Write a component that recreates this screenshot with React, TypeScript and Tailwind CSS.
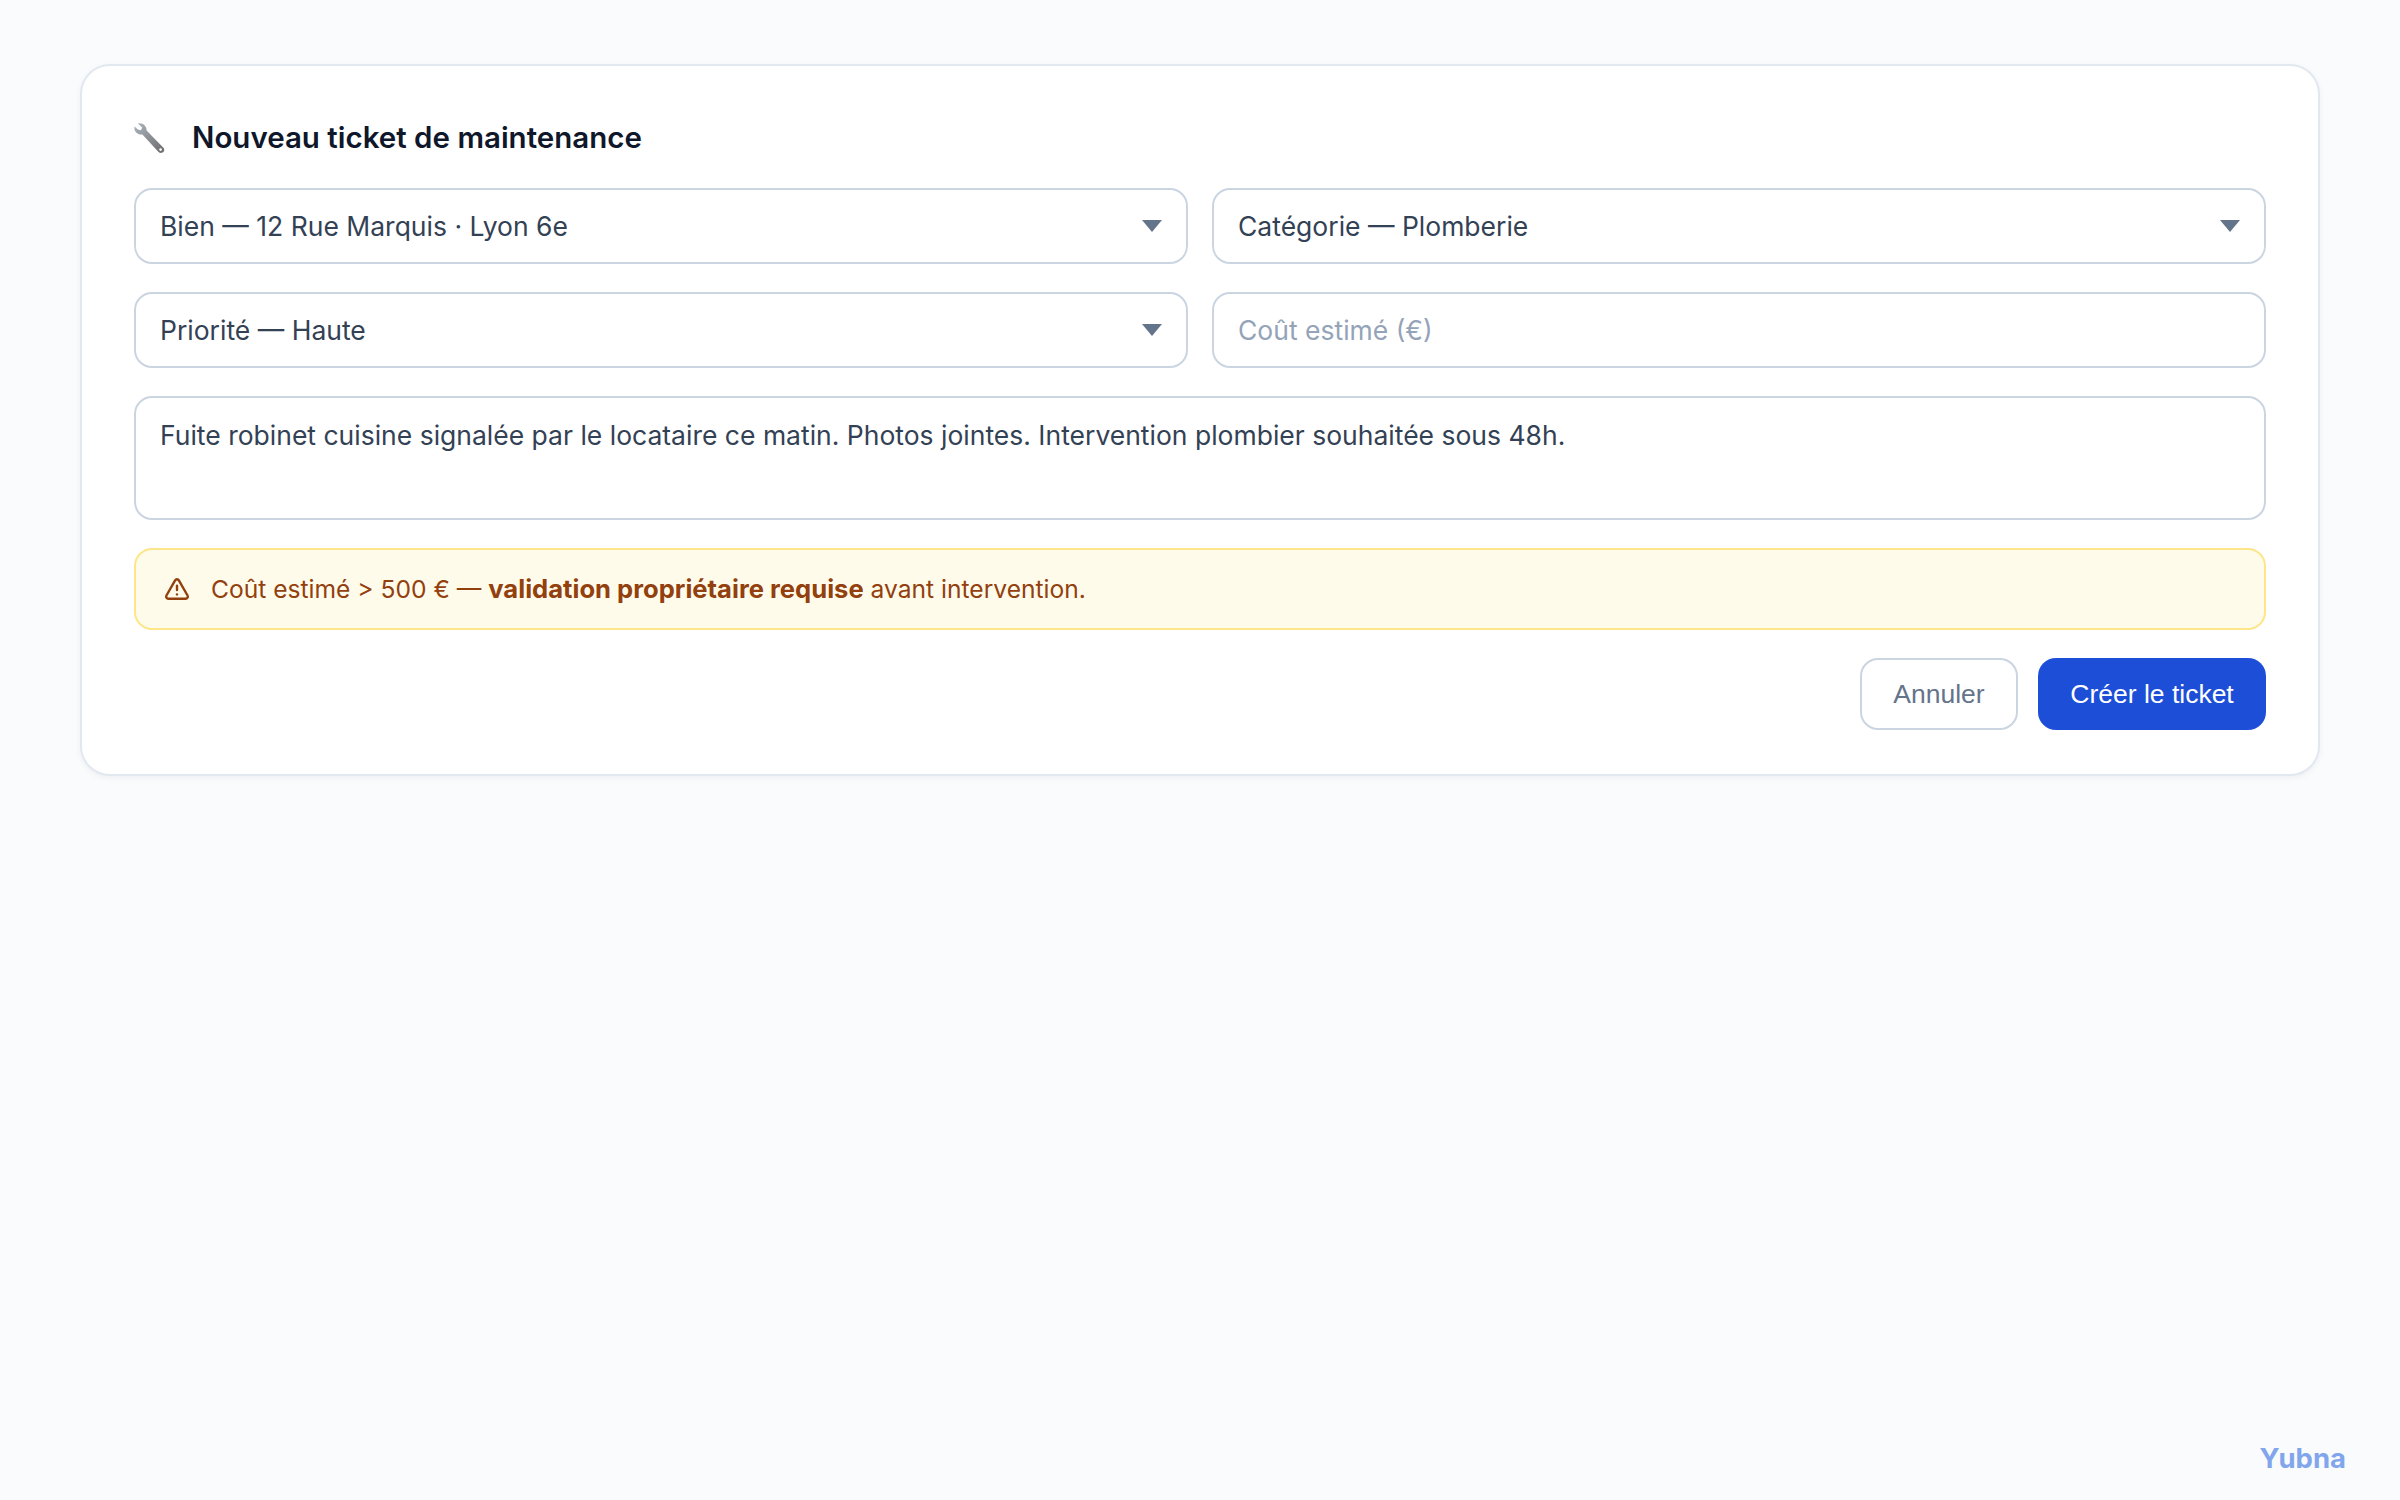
import React from "react";
import { TriangleAlert } from "lucide-react";

function WrenchIcon() {
  return (
    <svg viewBox="0 0 32 32" className="w-8 h-8 shrink-0 -ml-[1px]">
      <defs>
        <linearGradient id="wrench" x1="0" y1="0" x2="1" y2="1">
          <stop offset="0" stopColor="#aab4bd" />
          <stop offset="1" stopColor="#6d6a6c" />
        </linearGradient>
      </defs>
      <path
        d="M5 1.5 L9.2 5.4 L8 8.2 L5 7.6 L1.5 4.5 C0.8 8.4 2.8 11.6 7 12.4 L9.4 12.6 L25.5 30 C27 31.4 29.4 31.2 30.6 29.8 C31.6 28.4 31.4 26.6 30.2 25.4 L13.6 8.6 C13.8 4.6 10 0.6 5 1.5 Z"
        fill="url(#wrench)"
      />
      <circle cx="27.6" cy="27.6" r="1.3" fill="#ffffff" />
    </svg>
  );
}

function Select({ label }: { label: string }) {
  return (
    <div className="h-[76px] flex items-center justify-between pl-[24px] pr-[24px] bg-white border-2 border-[#cbd5e1] rounded-[18px] text-[26.5px] text-[#334155]">
      <span className="pt-[2px]">{label}</span>
      <svg viewBox="0 0 20 12" className="w-5 h-3">
        <path d="M0 0H20L10 12Z" fill="#64748b" />
      </svg>
    </div>
  );
}

export default function App() {
  return (
    <div className="h-[1500px] flex flex-col bg-[#fafbfd] px-[80px] pt-[64px] font-['Inter',sans-serif]">
      <div className="flex flex-col gap-[28px] px-[52px] pt-[50px] pb-[44px] bg-white border-2 border-[#e2e8f0] rounded-[30px] shadow-[0_2px_6px_rgba(15,23,42,0.05)]">
        <div className="flex items-center gap-[27px] h-[44px] mb-[-0.5px]">
          <WrenchIcon />
          <h1 className="text-[29.5px] font-semibold text-[#0f172a] -mt-[2px]">Nouveau ticket de maintenance</h1>
        </div>
        <div className="grid grid-cols-2 gap-x-[24px] gap-y-[28px]">
          <Select label="Bien — 12 Rue Marquis · Lyon 6e" />
          <Select label="Catégorie — Plomberie" />
          <Select label="Priorité — Haute" />
          <input
            placeholder="Coût estimé (€)"
            className="h-[76px] px-[24px] pt-[1px] bg-white border-2 border-[#cbd5e1] rounded-[18px] text-[26.5px] placeholder:text-[#94a3b8]"
          />
        </div>
        <textarea
          readOnly
          value="Fuite robinet cuisine signalée par le locataire ce matin. Photos jointes. Intervention plombier souhaitée sous 48h."
          className="h-[124px] px-[24px] pt-[19px] pb-[16px] bg-white border-2 border-[#cbd5e1] rounded-[18px] text-[26.5px] leading-[36px] text-[#334155] resize-none"
        />
        <div className="h-[82px] flex items-center gap-[21px] pl-[28px] pr-[30px] bg-[#fffbeb] border-2 border-[#fde68a] rounded-[18px] text-[24.6px] text-[#92400e]">
          <TriangleAlert className="w-[26px] h-[26px]" strokeWidth={2.2} />
          <span className="pt-[1px]">
            Coût estimé &gt; 500 € — <strong className="font-bold text-[25.6px]">validation propriétaire requise</strong> avant intervention.
          </span>
        </div>
        <div className="flex justify-end gap-[20px] font-['Liberation_Sans',sans-serif] text-[26.5px]">
          <button className="h-[72px] w-[158px] pt-[2px] bg-white border-2 border-[#cbd5e1] rounded-[18px] text-[#64748b]">Annuler</button>
          <button className="h-[72px] w-[228px] pt-[2px] bg-[#1d4ed8] rounded-[18px] text-white">Créer le ticket</button>
        </div>
      </div>
      <div className="mt-auto self-end mr-[-26px] mb-[21px] text-[27.5px] font-bold text-[#82a6ec]">Yubna</div>
    </div>
  );
}
